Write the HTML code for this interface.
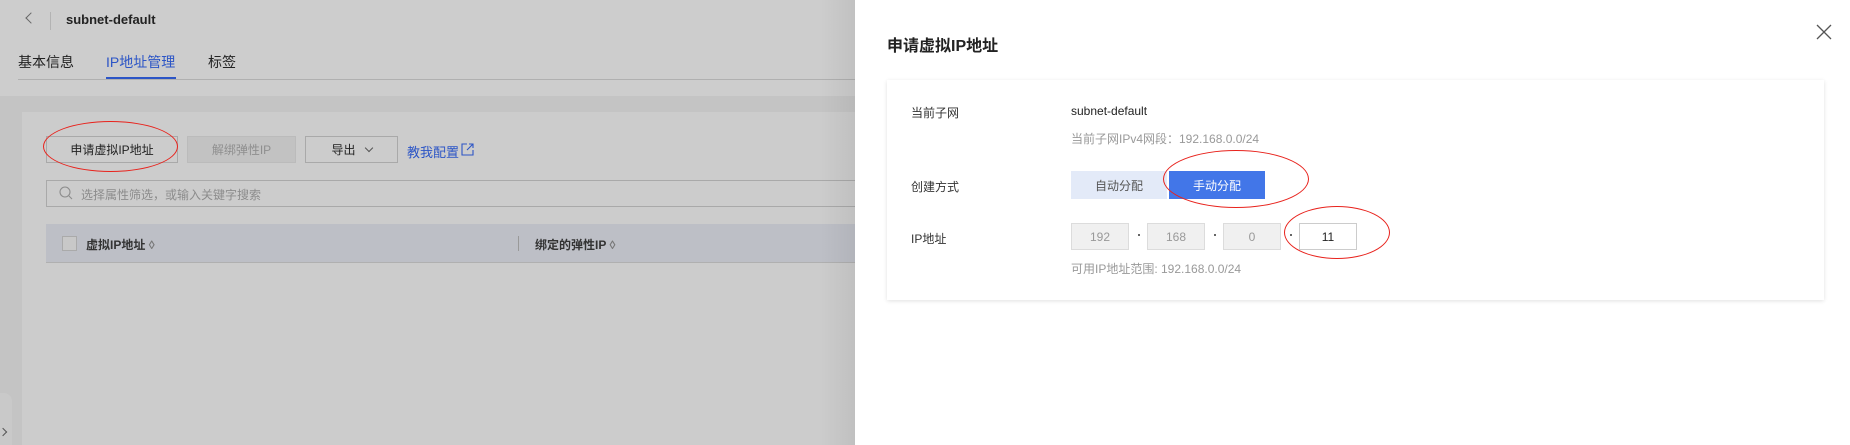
<!DOCTYPE html>
<html><head><meta charset="utf-8"><style>
*{box-sizing:border-box;margin:0;padding:0}
body{width:1850px;height:445px;overflow:hidden;position:relative;background:#cdcdcd;font-family:"Liberation Sans","Noto Sans CJK SC",sans-serif;font-size:12px;color:#252b3a}
.a{position:absolute}
.btn{position:absolute;height:27px;border:1px solid #a9a9a9;display:flex;align-items:center;justify-content:center;font-size:12px}
.ip{position:absolute;top:223px;width:58px;height:27px;border:1px solid #dcdcdc;background:#f0f0f0;color:#999;display:flex;align-items:center;justify-content:center;font-size:12px}
.dot{position:absolute;top:234px;width:2px;height:2px;background:#666}
.ell{position:absolute;border:1.5px solid #e8231d;border-radius:50%}
</style></head><body>
<!-- left (dimmed) page -->
<div class="a" style="left:27px;top:14px;width:8px;height:8px;border-left:1px solid #666;border-bottom:1px solid #666;transform:rotate(45deg)"></div>
<div class="a" style="left:50px;top:12px;width:1px;height:18px;background:#b3b3b3"></div>
<div class="a" style="left:66px;top:12px;font-size:13px;font-weight:bold;color:#222">subnet-default</div>
<div class="a" style="left:18px;top:52px;font-size:14px;color:#222">基本信息</div>
<div class="a" style="left:106px;top:52px;font-size:14px;color:#2c55c6">IP地址管理</div>
<div class="a" style="left:208px;top:52px;font-size:14px;color:#222">标签</div>
<div class="a" style="left:18px;top:79px;width:840px;height:1px;background:#b0b0b0"></div>
<div class="a" style="left:106px;top:77px;width:70px;height:2px;background:#2c55c6"></div>
<div class="a" style="left:0;top:96px;width:860px;height:349px;background:#c4c4c4"></div>
<div class="a" style="left:22px;top:112px;width:840px;height:333px;background:#cccccc"></div>
<div class="btn" style="left:46px;top:136px;width:132px;color:#222">申请虚拟IP地址</div>
<div class="btn" style="left:187px;top:136px;width:109px;background:#c2c2c2;border-color:#bbb;color:#8f8f8f">解绑弹性IP</div>
<div class="btn" style="left:305px;top:136px;width:93px;color:#222">导出 <span style="display:inline-block;width:6px;height:6px;border-right:1px solid #555;border-bottom:1px solid #555;transform:rotate(45deg);margin:-4px 0 0 10px"></span></div>
<div class="a" style="left:407px;top:142px;color:#2c55c6;font-size:13px">教我配置</div>
<svg class="a" style="left:461px;top:143px" width="13" height="13" viewBox="0 0 13 13"><path d="M6 1H1v11h11V7M8 1h4v4M12 1L6 7" fill="none" stroke="#2c55c6" stroke-width="1.1"/></svg>
<div class="a" style="left:46px;top:180px;width:820px;height:27px;border:1px solid #a9a9a9"></div>
<svg class="a" style="left:59px;top:186px" width="14" height="15"><circle cx="6" cy="6" r="5" fill="none" stroke="#8c8c8c" stroke-width="1.1"/><path d="M10 10l3 3" stroke="#8c8c8c" stroke-width="1.1"/></svg>
<div class="a" style="left:81px;top:186px;color:#8c8c8c;font-size:12px">选择属性筛选，或输入关键字搜索</div>
<div class="a" style="left:46px;top:224px;width:820px;height:39px;background:#bdbfc6;border-bottom:1px solid #b0b0b0"></div>
<div class="a" style="left:62px;top:236px;width:15px;height:15px;border:1px solid #aaa;background:#c8c8c8"></div>
<div class="a" style="left:86px;top:236px;font-weight:bold;color:#333;font-size:12px">虚拟IP地址 <span style="color:#777">◊</span></div>
<div class="a" style="left:518px;top:236px;width:1px;height:15px;background:#999"></div>
<div class="a" style="left:535px;top:236px;font-weight:bold;color:#333;font-size:12px">绑定的弹性IP <span style="color:#777">◊</span></div>
<div class="a" style="left:0;top:393px;width:12px;height:52px;background:#c9c9c9;border-radius:0 8px 0 0"></div>
<div class="a" style="left:0;top:429px;width:6px;height:6px;border-right:1px solid #555;border-bottom:1px solid #555;transform:rotate(-45deg)"></div>
<div class="ell" style="left:43px;top:121px;width:135px;height:51px"></div>
<div class="a" style="left:820px;top:0;width:35px;height:445px;background:linear-gradient(90deg,rgba(0,0,0,0),rgba(0,0,0,0.06))"></div>
<!-- drawer -->
<div class="a" style="left:855px;top:0;width:995px;height:445px;background:#fff"></div>
<div class="a" style="left:887px;top:32px;font-size:16px;font-weight:bold;color:#222">申请虚拟IP地址</div>
<svg class="a" style="left:1816px;top:24px" width="16" height="16"><path d="M1 1L15 15M15 1L1 15" stroke="#555" stroke-width="1.3"/></svg>
<div class="a" style="left:887px;top:80px;width:937px;height:220px;background:#fff;box-shadow:0 1px 4px rgba(0,0,0,0.12)"></div>
<div class="a" style="left:911px;top:104px;color:#333">当前子网</div>
<div class="a" style="left:911px;top:178px;color:#333">创建方式</div>
<div class="a" style="left:911px;top:230px;color:#333">IP地址</div>
<div class="a" style="left:1071px;top:104px;color:#222">subnet-default</div>
<div class="a" style="left:1071px;top:130px;color:#999">当前子网IPv4网段：192.168.0.0/24</div>
<div class="a" style="left:1071px;top:171px;width:96px;height:28px;background:#e3eaf8;color:#555;display:flex;align-items:center;justify-content:center">自动分配</div>
<div class="a" style="left:1169px;top:171px;width:96px;height:28px;background:#4276e8;color:#fff;display:flex;align-items:center;justify-content:center">手动分配</div>
<div class="ip" style="left:1071px">192</div>
<div class="dot" style="left:1138px"></div>
<div class="ip" style="left:1147px">168</div>
<div class="dot" style="left:1214px"></div>
<div class="ip" style="left:1223px">0</div>
<div class="dot" style="left:1290px"></div>
<div class="ip" style="left:1299px;background:#fff;border-color:#ccc;color:#222">11</div>
<div class="a" style="left:1071px;top:260px;color:#999">可用IP地址范围: 192.168.0.0/24</div>
<div class="ell" style="left:1163px;top:150px;width:146px;height:58px"></div>
<div class="ell" style="left:1284px;top:206px;width:106px;height:53px"></div>
</body></html>
